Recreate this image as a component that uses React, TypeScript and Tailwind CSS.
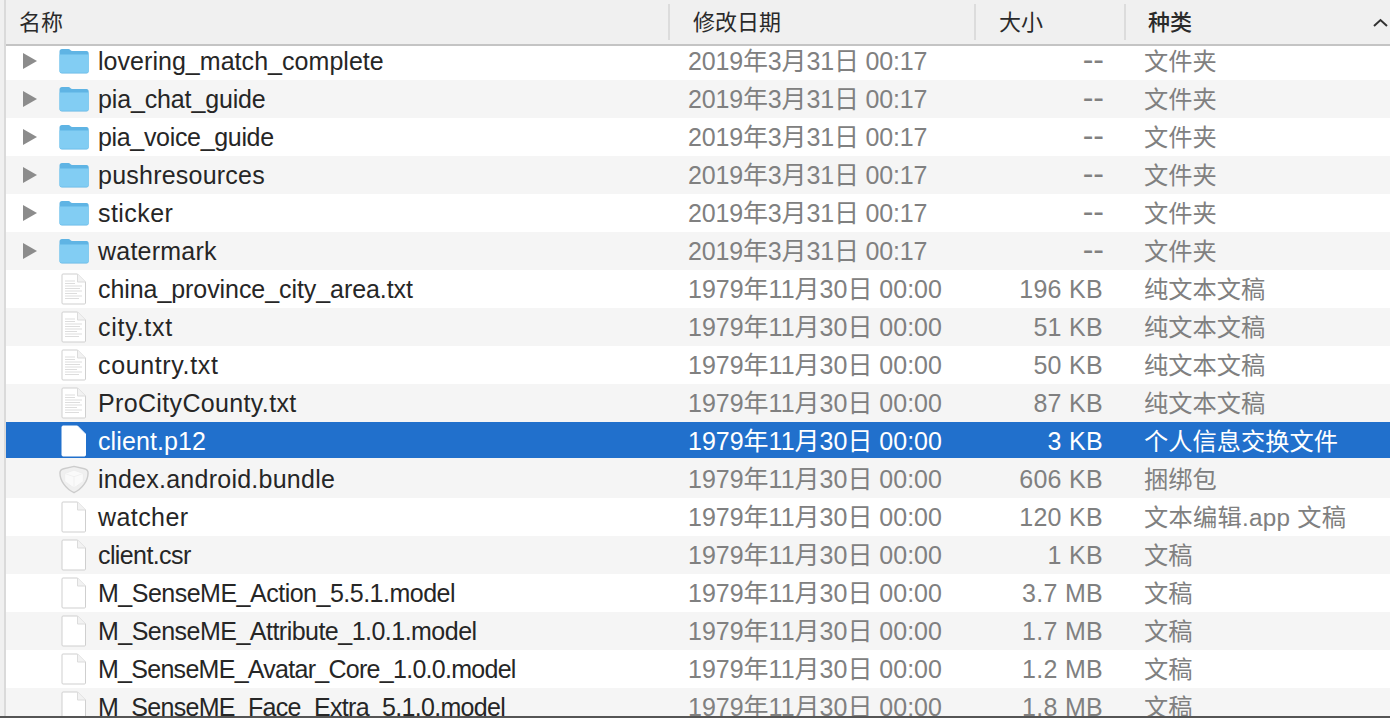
import React from "react"

type Kind = "folder" | "text" | "blank" | "bundle"

type Row = {
  name: string
  fit: string
  size: string
  type: string
  icon: Kind
  selected?: boolean
}

const rows: Row[] = [
  { name: "lovering_match_complete", fit: "tracking-[0.04px]", size: "--", type: "文件夹", icon: "folder" },
  { name: "pia_chat_guide", fit: "tracking-[-0.14px]", size: "--", type: "文件夹", icon: "folder" },
  { name: "pia_voice_guide", fit: "tracking-[-0.33px]", size: "--", type: "文件夹", icon: "folder" },
  { name: "pushresources", fit: "tracking-[0.23px]", size: "--", type: "文件夹", icon: "folder" },
  { name: "sticker", fit: "tracking-[0.43px]", size: "--", type: "文件夹", icon: "folder" },
  { name: "watermark", fit: "tracking-[0.22px]", size: "--", type: "文件夹", icon: "folder" },
  { name: "china_province_city_area.txt", fit: "tracking-[-0.07px]", size: "196 KB", type: "纯文本文稿", icon: "text" },
  { name: "city.txt", fit: "tracking-[0.75px]", size: "51 KB", type: "纯文本文稿", icon: "text" },
  { name: "country.txt", fit: "tracking-[0.64px]", size: "50 KB", type: "纯文本文稿", icon: "text" },
  { name: "ProCityCounty.txt", fit: "tracking-[0.35px]", size: "87 KB", type: "纯文本文稿", icon: "text" },
  { name: "client.p12", fit: "tracking-[0.1px]", size: "3 KB", type: "个人信息交换文件", icon: "blank", selected: true },
  { name: "index.android.bundle", fit: "tracking-[0.25px]", size: "606 KB", type: "捆绑包", icon: "bundle" },
  { name: "watcher", fit: "tracking-[0.43px]", size: "120 KB", type: "文本编辑.app 文稿", icon: "blank" },
  { name: "client.csr", fit: "tracking-[-0.6px]", size: "1 KB", type: "文稿", icon: "blank" },
  { name: "M_SenseME_Action_5.5.1.model", fit: "tracking-[-0.5px]", size: "3.7 MB", type: "文稿", icon: "blank" },
  { name: "M_SenseME_Attribute_1.0.1.model", fit: "tracking-[-0.52px]", size: "1.7 MB", type: "文稿", icon: "blank" },
  { name: "M_SenseME_Avatar_Core_1.0.0.model", fit: "tracking-[-0.72px]", size: "1.2 MB", type: "文稿", icon: "blank" },
  { name: "M_SenseME_Face_Extra_5.1.0.model", fit: "tracking-[-0.7px]", size: "1.8 MB", type: "文稿", icon: "blank" },
]

function FolderIcon() {
  return (
    <svg width="30" height="26" viewBox="0 0 30 26">
      <path d="M0.500 3.500C0.500 2 1.500 1 3 1H9.500C11 1 11.500 3 13.500 3H27.500C29 3 29.700 4 29.700 5.500V23C29.700 24.500 29 25.500 27.500 25.500H3C1.500 25.500 0.500 24.500 0.500 23Z" fill="#5fb4e4" />
      <path d="M0.500 6.500H29.700V23C29.700 24.200 29 24.800 27.500 24.800H3C1.500 24.800 0.500 24.200 0.500 23Z" fill="#82cdf3" />
    </svg>
  )
}

function FileIcon({ lines, selected }: { lines?: boolean; selected?: boolean }) {
  return (
    <svg width="26" height="32" viewBox="0 0 26 32">
      <path
        d="M2 1H16.500L24.500 9V30C24.500 30.600 24.100 31 23.500 31H2C1.400 31 1 30.600 1 30V2C1 1.400 1.400 1 2 1Z"
        fill="#ffffff"
        stroke={selected ? "#ffffff" : "#cfcfcf"}
      />
      {!selected && <path d="M16.500 1V9H24.500" fill="#f2f2f2" stroke="#dcdcdc" />}
      {lines && (
        <path
          d="M4 8H14M4 10.500H14M4 13H21M4 15.500H19M4 18H21M4 20.500H16M4 23H21M4 25.500H18"
          stroke="#dddddd"
          strokeWidth="1"
        />
      )}
    </svg>
  )
}

function BundleIcon() {
  return (
    <svg width="30" height="29" viewBox="0 0 32 30">
      <path d="M16 1L27 3.500C30 4.200 31 5.500 31 8C31 16 25 25 16 29C7 25 1 16 1 8C1 5.500 2 4.200 5 3.500Z" fill="#f0f0f0" stroke="#cccccc" strokeWidth="1.500" />
      <path d="M6 8.500L16 5L26 8.500V17L16 24L6 17Z" fill="#fafafa" stroke="#eeeeee" />
      <path d="M6 8.500L16 12L26 8.500M16 12V24" fill="none" stroke="#f0f0f0" />
    </svg>
  )
}

function RowIcon({ row }: { row: Row }) {
  if (row.icon === "folder") return <FolderIcon />
  if (row.icon === "bundle") return <BundleIcon />
  return <FileIcon lines={row.icon === "text"} selected={row.selected} />
}

function HeaderCell({ label, className, textClass }: { label: string; className: string; textClass: string }) {
  return (
    <div className={`flex h-[36px] items-center border-r-2 border-[#dcdcdc] ${className}`}>
      <span className={`text-[22px] text-[#2a2a2a] ${textClass}`}>{label}</span>
    </div>
  )
}

export default function App() {
  return (
    <div
      className="flex h-[718px] w-[1390px] flex-col overflow-hidden bg-white"
      style={{ fontFamily: '"Liberation Sans", "Noto Sans CJK SC", sans-serif' }}
    >
      <div className="flex min-h-0 flex-1">
        <div className="w-[6px] shrink-0 border-r-2 border-[#dadada] bg-[#f0f0f0]" />
        <div className="min-w-0 flex-1 overflow-hidden">
          {/* column headers, the list runs a little under them */}
          <div className="relative z-10 -mb-[4px] flex h-[46px] items-center border-b-2 border-[#c4c4c4] bg-[#f0f0f0]">
            <HeaderCell label="名称" className="w-[664px]" textClass="pl-[13px]" />
            <HeaderCell label="修改日期" className="w-[306px]" textClass="pl-[23px]" />
            <HeaderCell label="大小" className="w-[150px]" textClass="pl-[23px]" />
            <div className="relative flex h-[36px] flex-1 items-center">
              <span className="pl-[22px] text-[22px] font-medium text-[#2a2a2a]">种类</span>
              <svg className="absolute right-[2px] top-[14px]" width="15" height="9" viewBox="0 0 15 9">
                <path d="M1 8L7.500 2L14 8" fill="none" stroke="#333333" strokeWidth="2" />
              </svg>
            </div>
          </div>
          {rows.map((row, i) => {
            const muted = row.selected ? "text-white" : "text-[#808080]"
            const isFolder = row.icon === "folder"
            return (
              <div
                key={row.name}
                className={`flex items-center text-[25px] ${
                  row.selected
                    ? "h-[36px] bg-[#2170cc] pt-[2px]"
                    : row.icon === "bundle"
                      ? "h-[40px] bg-[#f5f5f5] pt-[2px]"
                      : i % 2 === 1
                        ? "h-[38px] bg-[#f5f5f5]"
                        : "h-[38px] bg-white"
                }`}
              >
                <div className="flex w-[664px] shrink-0 items-center">
                  <div className="flex w-[32px] shrink-0 justify-end">
                    {isFolder && (
                      <svg width="16" height="18" viewBox="0 0 16 18">
                        <path d="M1 1L15 9L1 17Z" fill="#8c8c8c" />
                      </svg>
                    )}
                  </div>
                  <div className="ml-[18px] mr-[6px] flex w-[36px] shrink-0 justify-center">
                    <RowIcon row={row} />
                  </div>
                  <span className={`pt-[2px] ${row.fit} ${row.selected ? "text-white" : "text-[#262626]"}`}>{row.name}</span>
                </div>
                <div className={`w-[306px] shrink-0 pl-[18px] pt-[2px] ${muted} ${isFolder ? "tracking-[-0.16px]" : ""}`}>
                  {isFolder ? "2019年3月31日 00:17" : "1979年11月30日 00:00"}
                </div>
                <div className={`w-[127px] shrink-0 pt-[2px] text-right ${muted}`}>
                  {isFolder ? <span className="-mr-[1px] inline-block text-[32px] leading-none">{row.size}</span> : <span className="tracking-[0.3px]">{row.size}</span>}
                </div>
                <div className={`pl-[41px] pt-[2px] text-[24.25px] ${muted} ${row.icon === "blank" && row.size === "120 KB" ? "tracking-[0.25px]" : ""}`}>{row.type}</div>
              </div>
            )
          })}
        </div>
      </div>
      <div className="h-[2px] shrink-0 bg-[#555555]" />
    </div>
  )
}
